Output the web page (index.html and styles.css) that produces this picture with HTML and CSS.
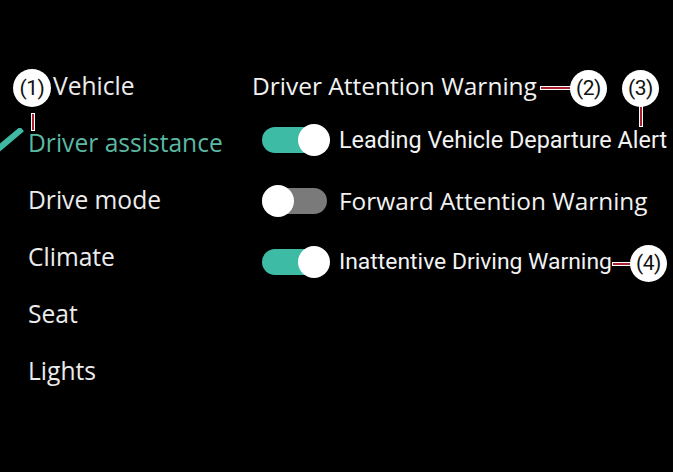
FILE: index.html
```html
<!DOCTYPE html>
<html>
<head>
<meta charset="utf-8">
<link rel="stylesheet" href="styles.css">
</head>
<body>
<div class="screen">
  <nav class="menu">
    <div class="item sub">Vehicle</div>
    <div class="item active">
      <svg class="slash" width="26" height="26" viewBox="0 0 26 26"><path d="M-3 22 L22 1" stroke="#3fb9a3" stroke-width="6" stroke-linecap="butt"/></svg>
      Driver assistance
    </div>
    <div class="item">Drive mode</div>
    <div class="item">Climate</div>
    <div class="item">Seat</div>
    <div class="item">Lights</div>
  </nav>
  <section class="panel">
    <h1 class="title">Driver Attention Warning</h1>
    <div class="row">
      <span class="toggle on"><span class="track"></span><span class="thumb"></span></span>
      <span class="label">Leading Vehicle Departure Alert</span>
    </div>
    <div class="row">
      <span class="toggle off"><span class="track"></span><span class="thumb"></span></span>
      <span class="label wide">Forward Attention Warning</span>
    </div>
    <div class="row">
      <span class="toggle on"><span class="track"></span><span class="thumb"></span></span>
      <span class="label narrow">Inattentive Driving Warning</span>
    </div>
  </section>

  <div class="callout c1">(1)</div>
  <div class="stem s1"></div>
  <div class="callout c2">(2)</div>
  <div class="lead l2"></div>
  <div class="callout c3">(3)</div>
  <div class="stem s3"></div>
  <div class="callout c4">(4)</div>
  <div class="lead l4"></div>
</div>
</body>
</html>
```
FILE: styles.css
```css
* { box-sizing: border-box; }
html, body { margin: 0; padding: 0; background: #000; }
.screen {
  position: relative;
  width: 673px;
  height: 472px;
  background: #000;
  display: flex;
  overflow: hidden;
}
.menu {
  width: 252px;
  padding-top: 57px;
  padding-left: 28px;
  font-family: "Open Sans", sans-serif;
  font-size: 24.6px;
  color: #ececec;
}
.item {
  height: 57px;
  line-height: 57px;
  white-space: nowrap;
  position: relative;
}
.item.sub { padding-left: 25px; }
.item.active { color: #5bb8a2; }
.slash {
  position: absolute;
  left: -28px;
  top: 14px;
}
.panel {
  flex: 1;
  padding-top: 65px;
  font-family: Roboto, sans-serif;
  color: #f2f2f2;
}
.title {
  margin: 0 0 3px 0;
  font-family: "Open Sans", sans-serif;
  font-size: 24.5px;
  font-weight: 400;
  height: 41px;
  line-height: 41px;
  white-space: nowrap;
}
.row {
  height: 61px;
  display: flex;
  align-items: center;
  padding-left: 10px;
  gap: 9px;
}
.label { font-size: 23.4px; white-space: nowrap; }
.label.wide { font-family: "Open Sans", sans-serif; font-size: 24.4px; }
.label.narrow { font-size: 22.9px; }
.toggle {
  position: relative;
  width: 68px;
  height: 32px;
  flex: none;
}
.track {
  position: absolute;
  left: 0;
  top: 3px;
  width: 65px;
  height: 26px;
  border-radius: 13px;
}
.on .track { background: #3dbba4; }
.off .track { background: #7a7a7a; }
.thumb {
  position: absolute;
  top: 0;
  width: 32px;
  height: 32px;
  border-radius: 50%;
  background: #fff;
}
.on .thumb { left: 36px; }
.off .thumb { left: 0; }

.callout {
  position: absolute;
  width: 37px;
  height: 37px;
  border-radius: 50%;
  background: #fff;
  color: #111;
  font-family: Roboto, sans-serif;
  font-size: 21px;
  line-height: 37px;
  text-align: center;
  letter-spacing: -0.5px;
}
.c1 { left: 13px; top: 69px; width: 38px; height: 38px; line-height: 38px; }
.c2 { left: 570px; top: 70px; }
.c3 { left: 622px; top: 70px; }
.c4 { left: 630px; top: 245px; }
.stem, .lead {
  position: absolute;
  background: #a8202e;
  border: 1px solid #fff;
}
.stem { width: 4px; }
.lead { height: 4px; }
.s1 { left: 31px; top: 113px; height: 18px; }
.s3 { left: 639px; top: 106px; height: 21px; }
.l2 { left: 540px; top: 86px; width: 31px; }
.l4 { left: 612px; top: 262px; width: 19px; }
```
